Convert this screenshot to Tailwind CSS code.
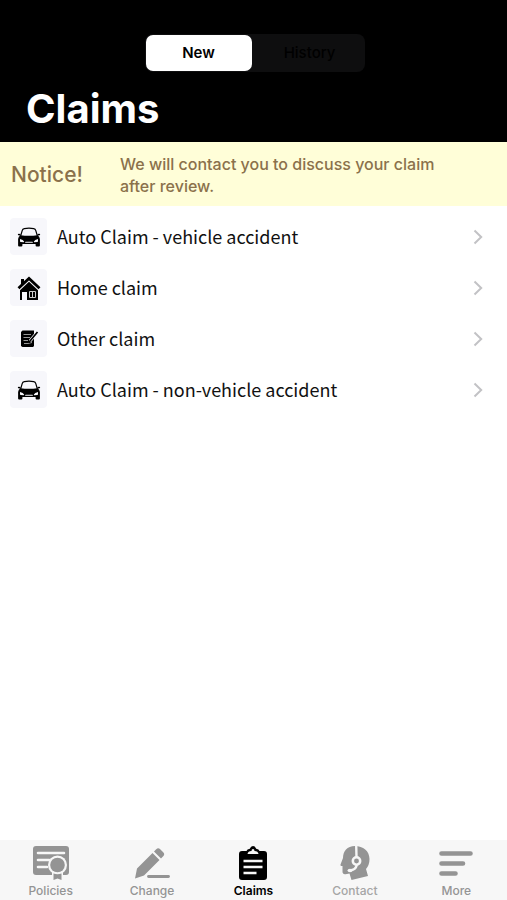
<!DOCTYPE html>
<html lang="en">
<head>
<meta charset="utf-8">
<meta name="viewport" content="width=device-width, initial-scale=1">
<title>Claims</title>
<script src="https://cdn.jsdelivr.net/npm/@tailwindcss/browser@4"></script>
</head>
<body class="bg-white font-['Inter',sans-serif]">
<svg class="hidden" aria-hidden="true">
  <symbol id="car" viewBox="0 0 24 20">
    <path d="M3.600 9 5.200 3.600Q5.600 1.900 7.300 1.600 12 .8 16.700 1.600q1.700.3 2.100 2L20.400 9" fill="none" stroke="#000" stroke-width="1.200"/>
    <path d="M.8 7.600q0-.9 1-.9l1.600.2.2 1.500H2Q.8 8.400.8 7.600ZM23.200 7.600q0-.9-1-.9l-1.600.2-.2 1.500H22q1.200 0 1.200-.8Z"/>
    <path fill-rule="evenodd" d="M3.600 8.200Q12 9.400 20.400 8.200 22.700 9.500 22.900 12v6.500q0 1-1 1h-2.300q-1 0-1-1V17H5.400v1.500q0 1-1 1H2.100q-1 0-1-1V12Q1.300 9.500 3.600 8.200ZM3 12v2.200q0 .7.700.8l2.800.3q.8 0 .6-.8Q6.300 12.500 3 12ZM21 12v2.200q0 .7-.7.8l-2.800.3q-.8 0-.6-.8Q17.700 12.500 21 12ZM8 15.800h8l-.5-1h-7Z"/>
  </symbol>
  <symbol id="chevron" viewBox="0 0 10 16"><path d="m1.500 1.500 6.700 6.500-6.700 6.500" fill="none" stroke="#c2c2c5" stroke-width="2"/></symbol>
</svg>
<div class="flex min-h-screen flex-col">
  <header class="bg-black pt-[34px] pr-6 pb-2 pl-[26px]">
    <div class="mx-auto flex w-[220px] rounded-lg bg-[#0e0e0f] p-px" role="group" aria-label="Claim view">
      <button type="button" aria-pressed="true" class="h-9 w-[106px] rounded-[7px] bg-white text-[15px] font-semibold text-black">New</button>
      <button type="button" aria-pressed="false" class="h-9 flex-1 pl-1 text-[15px] font-medium text-black">History</button>
    </div>
    <h1 class="mt-3 text-[40px] leading-[50px] font-bold text-white">Claims</h1>
  </header>
  <main class="flex-1">
    <section class="flex h-16 items-center bg-[#fffed8] pt-px pr-12 pl-[11px] text-[#8b714b]" aria-label="Notice">
      <h2 class="w-[109px] shrink-0 text-[21px] font-medium">Notice!</h2>
      <p class="text-[16px] leading-[22px] font-medium">We will contact you to discuss your claim<br>after review.</p>
    </section>
    <ul class="flex flex-col gap-[14px] pt-3 pr-6 pl-[10px] font-['Noto_Sans_CJK_SC',sans-serif] text-[18px] text-[#111]">
      <li><a href="#auto" class="flex h-[37px] items-center gap-[10px]">
        <span class="grid size-[37px] place-items-center rounded bg-[#f7f7fb]"><svg class="h-5 w-6"><use href="#car"/></svg></span>
        <span class="flex-1">Auto Claim - vehicle accident</span><svg class="h-4 w-[10px]"><use href="#chevron"/></svg></a></li>
      <li><a href="#home" class="flex h-[37px] items-center gap-[10px]">
        <span class="grid size-[37px] place-items-center rounded bg-[#f7f7fb]"><svg class="size-6" viewBox="0 0 24 24">
          <path d="M1.500 12.300 12 2.500l10.500 9.800" fill="none" stroke="#000" stroke-width="2.800"/>
          <path d="M4 3h3v4L4 9.500ZM3 14.200l9-8.400 9 8.400V24H10v-8H5v8H3Z"/>
          <path d="M12.500 15.500h6v6h-6ZM15.500 15.500v6" fill="none" stroke="#ccc" stroke-width="1"/>
        </svg></span>
        <span class="flex-1">Home claim</span><svg class="h-4 w-[10px]"><use href="#chevron"/></svg></a></li>
      <li><a href="#other" class="flex h-[37px] items-center gap-[10px]">
        <span class="grid size-[37px] place-items-center rounded bg-[#f7f7fb]"><svg class="size-5" viewBox="0 0 20 20">
          <path d="M3.500 1.500H15V17l-1 1H3.500l-1.500-1V3Z"/>
          <path d="M4.500 5.500H12M4.500 8.500H11M4.500 11.500H9M5 14.500h4l4-1" fill="none" stroke="#aaa" stroke-width=".9"/>
          <path d="m11 12 7.500-9" stroke="#f7f7fb" stroke-width="3"/>
          <path d="m11 12 7.500-9M9.800 13.600l1.200-1" stroke="#000" stroke-width="1.700"/>
        </svg></span>
        <span class="flex-1">Other claim</span><svg class="h-4 w-[10px]"><use href="#chevron"/></svg></a></li>
      <li><a href="#non-vehicle" class="flex h-[37px] items-center gap-[10px]">
        <span class="grid size-[37px] place-items-center rounded bg-[#f7f7fb]"><svg class="h-5 w-6"><use href="#car"/></svg></span>
        <span class="flex-1">Auto Claim - non-vehicle accident</span><svg class="h-4 w-[10px]"><use href="#chevron"/></svg></a></li>
    </ul>
  </main>
  <nav class="grid h-[60px] grid-cols-5 bg-[#f7f7f7] pt-[5px] text-[12px] leading-4 font-medium text-[#949494]" aria-label="Main">
    <a href="#policies" class="flex flex-col items-center gap-[2px]">
      <svg class="h-9 w-10" viewBox="0 0 40 36" fill="#949494">
        <rect x="2" y="1" width="36" height="29" rx="3"/>
        <path d="M7 8h26M7 15h11M7 22h9" stroke="#f7f7f7" stroke-width="2.600" stroke-linecap="round"/>
        <circle cx="26.500" cy="20" r="9.500" fill="#f7f7f7"/>
        <path d="M21 26h11v10H21Z" fill="#f7f7f7"/>
        <circle cx="26.500" cy="20" r="7.300"/>
        <path d="M22.500 28.500q4 1.500 8 0V35l-4-1.500-4 1.500Z"/>
      </svg>Policies</a>
    <a href="#change" class="flex flex-col items-center gap-[2px]">
      <svg class="h-9 w-10" viewBox="0 0 40 36" fill="#949494">
        <path d="m3 33.500 2-10L20.500 8l7 7L12 30.500ZM22 6.500l2.200-2.200q2-2 4 0l3 3q2 2 0 4L29 13.500Z"/>
        <path d="M16.500 31.500h20" stroke="#949494" stroke-width="2.800" stroke-linecap="round"/>
      </svg>Change</a>
    <a href="#claims" aria-current="page" class="flex flex-col items-center gap-[2px] font-semibold text-black">
      <svg class="h-9 w-10" viewBox="0 0 40 36">
        <path d="M9 6h4.500q.5-2 3.300-2.300Q17.800 1 20 1t3.200 2.700Q26 4 26.500 6H31q3 0 3 3v23q0 3-3 3H9q-3 0-3-3V9q0-3 3-3Z"/>
        <path d="M14.500 9Q15 6 18.500 6q0-2 1.500-2t1.500 2q3.500 0 4 3Z" fill="#f7f7f7"/>
        <path d="M10.500 16h19M10.500 22h19M10.500 28h13" stroke="#f7f7f7" stroke-width="2.500"/>
      </svg>Claims</a>
    <a href="#contact" class="flex flex-col items-center gap-[2px] text-[#a5a5a5]">
      <svg class="h-9 w-10" viewBox="0 0 40 36" fill="#949494">
        <path d="M20 1C12 1 8 6 8 13L5.500 19.500q-.5 1.500 2 1.500v5.500q0 3 3 2.700l4-.7 2 6.500L33 31l-2-7q3.500-4 3.500-10C34.500 6 28 1 20 1Z"/>
        <path d="m21.200 0 .3 12M21.800 20q-1 5-7 5.500" fill="none" stroke="#f7f7f7" stroke-width="2.400"/>
        <circle cx="21.500" cy="16" r="3.700" fill="#949494" stroke="#f7f7f7" stroke-width="2.500"/>
        <ellipse cx="15" cy="25.500" rx="2.500" ry="1.700" fill="#f7f7f7"/>
      </svg>Contact</a>
    <a href="#more" class="flex flex-col items-center gap-[2px]">
      <svg class="h-9 w-10" viewBox="0 0 40 36">
        <path d="M5.500 8.500h29M5.500 18.500H27M5.500 28.500h14" stroke="#949494" stroke-width="4.600" stroke-linecap="round"/>
      </svg>More</a>
  </nav>
</div>
</body>
</html>
